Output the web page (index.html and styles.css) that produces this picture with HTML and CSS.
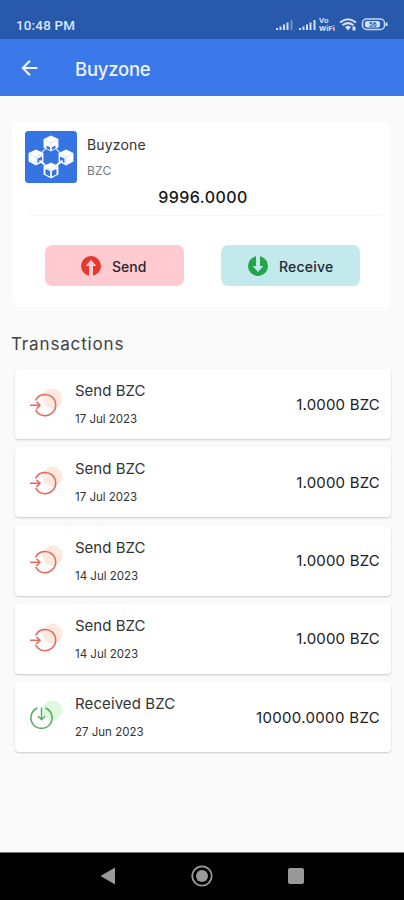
FILE: index.html
```
<!DOCTYPE html>
<html lang="en">
<head>
<meta charset="utf-8">
<title>Buyzone</title>
<link rel="stylesheet" href="styles.css">
</head>
<body>
<svg width="0" height="0" class="defs">
  <defs>
    <g id="cube">
      <path d="M0-6 5.5-3.3V3L0 6-5.5 3V-3.3Z" fill="#fff"/>
      <path d="M-4.500-2.500 0-.3 4.500-2.500M0-.3V5.500" fill="none" stroke="#c3d7fa" stroke-width=".5"/>
    </g>
    <g id="sent">
      <circle cx="23.500" cy="10.500" r="10" fill="#fee9de"/>
      <path d="M6.900 11.800A10.600 10.600 0 1 1 6.900 22.400" fill="none" stroke="#e8695e" stroke-width="1.600" stroke-linecap="round"/>
      <path d="M1 17.300H11M7.400 13.700 11 17.300 7.400 20.900" fill="none" stroke="#e8695e" stroke-width="1.500"/>
    </g>
    <g id="got">
      <circle cx="23.500" cy="9.500" r="10" fill="#e0f9dc"/>
      <path d="M8 7.200A10.600 10.600 0 1 0 17 7.200" fill="none" stroke="#57ae68" stroke-width="1.600" stroke-linecap="round"/>
      <path d="M12.500 6.500V18.300M8.900 15 12.500 18.600 16.100 15" fill="none" stroke="#57ae68" stroke-width="1.500"/>
    </g>
  </defs>
</svg>
<header class="status">
  <span class="time">10:48 PM</span>
  <svg class="indicators" width="114" height="18" viewBox="0 0 114 18">
    <g stroke="#d3e0f7" stroke-width="2">
      <path d="M2 15V13M5.500 15V11.500M9 15V9.500M12.500 15V7.500"/><path d="M16.500 15V5" opacity=".4"/>
      <path d="M25 15V13M28.500 15V11.500M32 15V9.500M35.500 15V7.500M39.500 15V5"/>
    </g>
    <text x="44" y="8" class="tiny">Vo</text>
    <text x="44" y="15.500" class="tiny" textLength="16" lengthAdjust="spacingAndGlyphs">WiFi</text>
    <g fill="none" stroke="#d3e0f7" stroke-width="2">
      <path d="M65 7.500Q73 1 81 7.500M67.500 10.300Q73 6 78.500 10.300"/>
    </g>
    <path d="M70 12Q73 9.500 76 12L73 15.500ZM77.500 11.500h3v4h-3Z" fill="#d3e0f7"/>
    <rect x="87.500" y="4" width="22" height="10.500" rx="4" fill="none" stroke="#c5d5f2" stroke-width="1.500"/>
    <rect x="90" y="6" width="15" height="6.500" rx="2" fill="#d3e0f7"/>
    <path d="M111.500 7.500v3.500" stroke="#d3e0f7" stroke-width="2"/>
    <text x="94" y="11.800" class="level">56</text>
  </svg>
</header>
<nav class="appbar">
  <svg width="18" height="18" viewBox="0 0 18 18"><path d="M16.500 9H2M9 1.700 1.800 9 9 16.300" fill="none" stroke="#f0f5ff" stroke-width="2.100"/></svg>
  <h1>Buyzone</h1>
</nav>
<main>
  <section class="wallet">
    <div class="coin">
      <svg width="52" height="52" viewBox="0 0 52 52">
        <rect width="52" height="52" rx="3.500" fill="#3574e2"/>
        <path d="M26 13 40 26.500 26 39 11 26.500Z" fill="none" stroke="#c6daff" stroke-width="1.400"/>
        <use href="#cube" transform="translate(26 12.500) scale(1.350)"/>
        <use href="#cube" transform="translate(11 26.500) scale(1.350)"/>
        <use href="#cube" transform="translate(41 26.500) scale(1.350)"/>
        <use href="#cube" transform="translate(26 39.500) scale(1.350)"/>
        <g fill="#3574e2">
          <path d="M21.500 14.500 25 16.200V19L21.500 17.300ZM30.500 14.500 27 16.200V19L30.500 17.300Z"/>
          <path d="M12.500 27.500 17 25.500V30L12.500 32ZM39.500 27.500 35 25.500V30L39.500 32Z"/>
          <path d="M20.500 38 25 40V45.500L20.500 43.300ZM31.500 38 27 40V45.500L31.500 43.300Z"/>
        </g>
        <path d="M14.500 29.500 20 34M37.500 29.500 32 34" stroke="#fff" stroke-width="1.700"/>
      </svg>
      <div class="names"><div class="name">Buyzone</div><div class="symbol">BZC</div></div>
    </div>
    <div class="balance">9996.0000</div>
    <div class="actions">
      <button class="action send">
        <svg width="20" height="20" viewBox="0 0 20 20"><circle cx="10" cy="10" r="10" fill="#e5382f"/><path d="M10 3.800 15.300 10H12V20H8V10H4.700Z" fill="#ffcbd0"/></svg>
        <span>Send</span>
      </button>
      <button class="action receive">
        <svg width="20" height="20" viewBox="0 0 20 20"><circle cx="10" cy="10" r="10" fill="#22a646"/><path d="M10 16 4.700 10H8V0H12V10H15.300Z" fill="#c2e9eb"/></svg>
        <span>Receive</span>
      </button>
    </div>
  </section>
  <h2>Transactions</h2>
  <ul class="list">
    <li class="tx"><svg width="36" height="32" viewBox="0 0 36 32"><use href="#sent"/></svg><div class="info"><div class="title">Send BZC</div><div class="date">17 Jul 2023</div></div><div class="amount">1.0000 BZC</div></li>
    <li class="tx"><svg width="36" height="32" viewBox="0 0 36 32"><use href="#sent"/></svg><div class="info"><div class="title">Send BZC</div><div class="date">17 Jul 2023</div></div><div class="amount">1.0000 BZC</div></li>
    <li class="tx"><svg width="36" height="32" viewBox="0 0 36 32"><use href="#sent"/></svg><div class="info"><div class="title">Send BZC</div><div class="date">14 Jul 2023</div></div><div class="amount">1.0000 BZC</div></li>
    <li class="tx"><svg width="36" height="32" viewBox="0 0 36 32"><use href="#sent"/></svg><div class="info"><div class="title">Send BZC</div><div class="date">14 Jul 2023</div></div><div class="amount">1.0000 BZC</div></li>
    <li class="tx"><svg width="36" height="32" viewBox="0 0 36 32"><use href="#got"/></svg><div class="info"><div class="title wide">Received BZC</div><div class="date">27 Jun 2023</div></div><div class="amount large">10000.0000 BZC</div></li>
  </ul>
</main>
<footer class="navbar">
  <svg width="16" height="18" viewBox="0 0 16 18"><path d="M15 .500V17.500L.500 9Z" fill="#999"/></svg>
  <svg width="22" height="22" viewBox="0 0 22 22"><circle cx="11" cy="11" r="9.700" fill="none" stroke="#999" stroke-width="1.800"/><circle cx="11" cy="11" r="6" fill="#999"/></svg>
  <svg width="16" height="16" viewBox="0 0 16 16"><rect width="16" height="16" rx="2" fill="#999"/></svg>
</footer>
</body>
</html>
```

FILE: styles.css
```
* { box-sizing: border-box; }
body {
  margin: 0;
  height: 900px;
  display: flex;
  flex-direction: column;
  overflow: hidden;
  background: #fafafa;
  color: #333;
  font-family: Inter, "Liberation Sans", sans-serif;
}
svg { display: block; flex: none; }
.defs { position: absolute; }
.status {
  height: 39px;
  flex: none;
  display: flex;
  justify-content: space-between;
  padding: 15px 15px 0 16px;
  background: #2859ac;
  color: #dde8fb;
}
.time { font: 500 13.4px/21px Roboto, sans-serif; letter-spacing: .2px; }
.tiny { font: 700 8px Roboto, sans-serif; fill: #d3e0f7; }
.level { font: 700 6.5px Roboto, sans-serif; fill: #2859ac; }
.appbar {
  height: 57px;
  flex: none;
  display: flex;
  align-items: center;
  gap: 36px;
  padding-left: 21px;
  background: #3a77e8;
}
h1 { margin: 2px 0 0; color: #edf3ff; font-size: 18.5px; line-height: 24px; font-weight: 500; letter-spacing: -.25px; }
main { flex: 1; padding: 26px 13px 0 12px; }
.wallet { height: 185px; padding: 9px 13px 0; border-radius: 7px; background: #fff; }
.coin { display: flex; gap: 10px; }
.names { padding-top: 4px; }
.name { font-size: 14px; line-height: 20px; letter-spacing: .15px; }
.symbol { margin-top: 8px; color: #777; font-size: 12px; line-height: 16px; letter-spacing: .2px; }
.balance {
  height: 33px;
  margin: 0 -4px 0 4px;
  padding-right: 5px;
  border-bottom: 1px solid #f6f6f6;
  color: #151515;
  font-size: 16px;
  font-weight: 500;
  line-height: 28px;
  text-align: center;
  letter-spacing: .45px;
}
.actions { display: flex; justify-content: space-between; margin: 29px 18px 0 20px; }
.action {
  width: 139px;
  height: 41px;
  display: flex;
  align-items: center;
  padding: 1px 0 0 36px;
  gap: 11px;
  border: 0;
  border-radius: 7px;
  color: #252832;
  font: 500 14px/20px Inter, sans-serif;
}
.action span { padding-top: 2px; }
.send { background: #ffcbd0; }
.receive { background: #c2e9eb; padding-left: 27px; letter-spacing: .2px; }
h2 { margin: 25px 0 0 -1px; color: #414141; font-size: 17px; line-height: 24px; font-weight: 400; letter-spacing: .85px; }
.list { list-style: none; margin: 13px 0 0 3px; padding: 0; display: flex; flex-direction: column; gap: 8.3px; }
.tx {
  height: 70px;
  display: flex;
  align-items: center;
  padding: 0 11px 0 14px;
  border-radius: 4px;
  background: #fff;
  box-shadow: 0 1px 2px rgba(0,0,0,.2);
}
.tx svg { margin-right: 10px; }
.info { flex: 1; }
.title { font-size: 15px; line-height: 20px; }
.wide { letter-spacing: .1px; }
.date { margin-top: 10px; font-size: 11.5px; line-height: 16px; }
.amount { color: #202020; font-size: 15px; white-space: nowrap; letter-spacing: .2px; }
.large { letter-spacing: .34px; }
.navbar {
  height: 48px;
  flex: none;
  display: flex;
  align-items: center;
  justify-content: space-between;
  padding: 0 100px 2px 100px;
  border-top: 1px solid #777;
  background: #000;
}
```
